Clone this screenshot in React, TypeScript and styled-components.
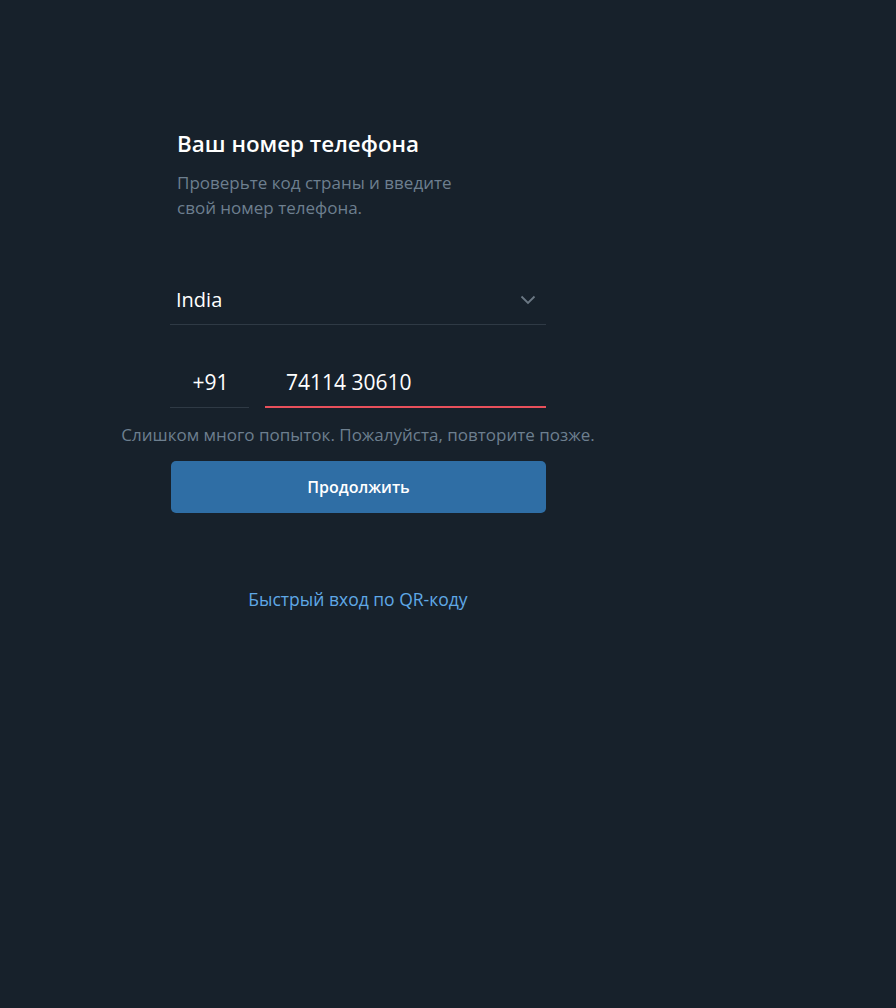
import React from "react";
import styled, { createGlobalStyle } from "styled-components";

const Global = createGlobalStyle`
  html, body { margin: 0; padding: 0; background: #17212b; }
  body { font-family: "Open Sans", "Noto Sans", sans-serif; -webkit-font-smoothing: antialiased; }
`;

const Page = styled.div`
  min-height: 1008px;
  background: #17212b;
  padding: 128px 0 0 170px;
  box-sizing: border-box;
`;

const Column = styled.div`
  width: 376px;
  display: flex;
  flex-direction: column;
`;

const Title = styled.h1`
  margin: 0 0 0 7px;
  font-size: 22.4px;
  line-height: 32px;
  font-weight: 600;
  color: #ffffff;
`;

const Subtitle = styled.p`
  margin: 10px 0 0 7px;
  font-size: 17px;
  line-height: 25px;
  color: #6d7f8f;
  width: 285px;
`;

const Field = styled.div<{ $width?: string; $accent?: boolean }>`
  display: flex;
  align-items: center;
  justify-content: space-between;
  height: 48px;
  box-sizing: border-box;
  width: ${(p) => p.$width ?? "100%"};
  border-bottom: ${(p) => (p.$accent ? "2px solid #e8505b" : "1px solid #2f3a45")};
  font-size: 20px;
  color: #ffffff;
`;

const CountryField = styled(Field)`
  margin-top: 57px;
  padding-left: 6px;
  padding-right: 10px;
  padding-bottom: 2px;
`;

const PhoneRow = styled.div`
  display: flex;
  gap: 16px;
  margin-top: 35px;
`;

const Prefix = styled(Field)`
  justify-content: center;
  padding-left: 2px;
  padding-bottom: 3px;
  font-size: 21px;
`;

const Number = styled(Field)`
  justify-content: flex-start;
  padding-left: 21px;
  padding-bottom: 2px;
  font-size: 21px;
`;

const ErrorText = styled.div`
  margin-top: 17px;
  margin-left: -60px;
  width: 496px;
  white-space: nowrap;
  font-size: 17px;
  line-height: 20px;
  color: #6d7f8f;
  display: flex;
  justify-content: center;
`;

const Button = styled.button`
  margin-top: 16px;
  margin-left: 1px;
  height: 52px;
  width: 375px;
  border: none;
  border-radius: 5px;
  background: #2f6ea5;
  color: #ffffff;
  font-family: inherit;
  font-size: 16px;
  font-weight: 600;
  cursor: pointer;
`;

const QrLink = styled.a`
  margin-top: 74px;
  align-self: center;
  font-size: 17.5px;
  color: #5fa8e6;
  text-decoration: none;
`;

const Chevron = () => (
  <svg width="16" height="10" viewBox="0 0 16 10" fill="none">
    <path d="M1.5 1.5 L8 8 L14.5 1.5" stroke="#6b7884" strokeWidth="1.8" />
  </svg>
);

export default function App() {
  return (
    <>
      <Global />
      <Page>
        <Column>
          <Title>Ваш номер телефона</Title>
          <Subtitle>Проверьте код страны и введите свой номер телефона.</Subtitle>
          <CountryField>
            <span>India</span>
            <Chevron />
          </CountryField>
          <PhoneRow>
            <Prefix $width="79px">+91</Prefix>
            <Number $width="281px" $accent>74114 30610</Number>
          </PhoneRow>
          <ErrorText>Слишком много попыток. Пожалуйста, повторите позже.</ErrorText>
          <Button>Продолжить</Button>
          <QrLink href="#">Быстрый вход по QR-коду</QrLink>
        </Column>
      </Page>
    </>
  );
}
